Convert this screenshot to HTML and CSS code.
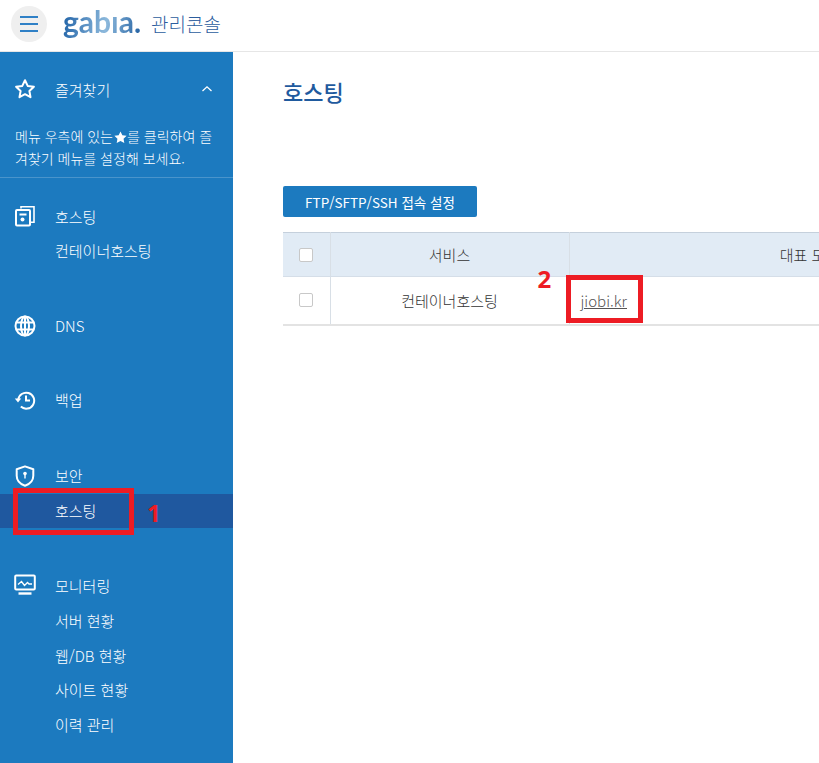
FILE: index.html
```html
<!DOCTYPE html>
<html lang="ko">
    <head>
        <meta charset="UTF-8">
        <meta name="viewport" content="width=device-width, initial-scale=1.0">
        <title>gabia 관리콘솔</title>
        <link rel="stylesheet" href="styles.css">
    </head>
    <body>
        <header class="topBar">
            <button class="menuButton">
                <span></span><span></span><span></span>
            </button>
            <span class="logo">gabıa.</span>
            <span class="consoleName">관리콘솔</span>
        </header>
        <div class="layout">
            <nav class="sidebar">
                <div class="favorites">
                    <div class="navTitle">
                        <svg class="navIcon" viewBox="0 0 22 22"><path d="M11 2.200l2.700 5.700 6.200.8-4.500 4.300 1.100 6.200-5.500-3-5.500 3 1.100-6.200-4.500-4.300 6.200-.8z" fill="none" stroke="#fff" stroke-width="2" stroke-linejoin="round"/></svg>
                        <span>즐겨찾기</span>
                        <svg class="chevron" viewBox="0 0 12 8"><path d="M1.500 6L6 1.800 10.500 6" fill="none" stroke="#fff" stroke-width="1.300"/></svg>
                    </div>
                    <p class="favoritesText">메뉴 우측에 있는<svg class="miniStar" viewBox="0 0 14 14"><path d="M7 .5l2 4.100 4.600.6-3.300 3.200.8 4.600L7 10.800l-4.100 2.200.8-4.600L.4 5.200 5 4.600z" fill="#fff"/></svg>를 클릭하여 즐겨찾기 메뉴를 설정해 보세요.</p>
                </div>
                <div class="navGroup first">
                    <div class="navTitle">
                        <svg class="navIcon" viewBox="0 0 22 22"><path d="M7 3.500V1.800h13v15.400h-3" fill="none" stroke="#fff" stroke-width="1.600"/><rect x="2" y="5" width="14" height="15.500" rx="1" fill="none" stroke="#fff" stroke-width="2"/><path d="M5.500 9.500h7" stroke="#fff" stroke-width="2"/><circle cx="8.500" cy="14.500" r="2" fill="#fff"/></svg>
                        <span>호스팅</span>
                    </div>
                    <a class="navItem">컨테이너호스팅</a>
                </div>
                <div class="navGroup dns">
                    <div class="navTitle">
                        <svg class="navIcon" viewBox="0 0 22 22"><g fill="none" stroke="#fff" stroke-width="2"><circle cx="11" cy="11" r="9.500"/><ellipse cx="11" cy="11" rx="4" ry="9.500"/><path d="M2 7.500h18M2 14.500h18M11 2v18"/></g></svg>
                        <span>DNS</span>
                    </div>
                </div>
                <div class="navGroup backup">
                    <div class="navTitle">
                        <svg class="navIcon" viewBox="0 0 22 22"><path d="M4.200 11a8 8 0 1 1 2.600 6.600" fill="none" stroke="#fff" stroke-width="2"/><path d="M.8 9.500h6.400L4 13.500z" fill="#fff"/><path d="M12 6.500v5h4" fill="none" stroke="#fff" stroke-width="2"/></svg>
                        <span>백업</span>
                    </div>
                </div>
                <div class="navGroup security">
                    <div class="navTitle">
                        <svg class="navIcon" viewBox="0 0 22 22"><path d="M11 1.400l8.300 2.900v6.400c0 4.700-3.500 8.300-8.300 10-4.800-1.700-8.300-5.300-8.300-10V4.300z" fill="none" stroke="#fff" stroke-width="2" stroke-linejoin="round"/><circle cx="11" cy="8.600" r="1.800" fill="#fff"/><path d="M11 9v4.500" stroke="#fff" stroke-width="1.400"/></svg>
                        <span>보안</span>
                    </div>
                    <a class="navItem active">
                        호스팅
                        <span class="markBox"></span>
                        <span class="markNumber">1</span>
                    </a>
                </div>
                <div class="navGroup monitoring">
                    <div class="navTitle">
                        <svg class="navIcon" viewBox="0 0 22 22"><rect x="1.200" y="1.500" width="19.600" height="14" rx="1" fill="none" stroke="#fff" stroke-width="2"/><path d="M4 10.500l3.500-3 3 4 3-3 1.500 1.500H18" fill="none" stroke="#fff" stroke-width="1.400"/><path d="M4.500 19.500h13" stroke="#fff" stroke-width="2.400"/></svg>
                        <span>모니터링</span>
                    </div>
                    <a class="navItem">서버 현황</a>
                    <a class="navItem">웹/DB 현황</a>
                    <a class="navItem">사이트 현황</a>
                    <a class="navItem">이력 관리</a>
                </div>
            </nav>
            <main class="content">
                <h1 class="pageTitle">호스팅</h1>
                <button class="ftpButton">FTP/SFTP/SSH 접속 설정</button>
                <table class="serviceTable">
                    <tr class="headRow">
                        <th class="checkCol"><span class="checkBox"></span></th>
                        <th class="serviceCol">서비스</th>
                        <th>대표 도메인</th>
                    </tr>
                    <tr>
                        <td class="checkCol"><span class="checkBox"></span></td>
                        <td class="serviceCol">컨테이너호스팅</td>
                        <td class="domainCell">
                            <a class="domainLink">jiobi.kr</a>
                            <span class="markBox"></span>
                            <span class="markNumber">2</span>
                        </td>
                    </tr>
                </table>
            </main>
        </div>
    </body>
</html>
```

FILE: styles.css
```css
* {
    box-sizing: border-box;
}

html, body {
    height: 100%;
}

body {
    margin: 0;
    display: flex;
    flex-direction: column;
    overflow: hidden;
    font-family: "Noto Sans CJK KR", "Noto Sans", sans-serif;
    font-weight: 300;
    color: #333;
}

.topBar {
    height: 52px;
    flex: none;
    display: flex;
    align-items: center;
    padding: 0 0 4px 11px;
    border-bottom: 1px solid #e6e6e6;
}

.menuButton {
    width: 36px;
    height: 36px;
    padding: 0;
    border: 0;
    border-radius: 50%;
    background: #efefef;
    display: flex;
    flex-direction: column;
    align-items: center;
    justify-content: center;
    gap: 5px;
}

.menuButton span {
    width: 18px;
    height: 2px;
    background: #2f80c6;
}

.logo {
    margin-left: 16px;
    padding-bottom: 6px;
    font-family: "Lato", sans-serif;
    font-size: 30px;
    line-height: 36px;
    font-weight: 700;
    background: linear-gradient(100deg, #1c5fa5, #8db9dc 55%, #1d5c9f);
    -webkit-background-clip: text;
    background-clip: text;
    color: transparent;
}

.consoleName {
    margin-left: 10px;
    font-size: 19px;
    color: #2c5d9e;
}

.layout {
    flex: 1;
    display: flex;
    min-height: 0;
}

.sidebar {
    width: 233px;
    flex: none;
    background: #1c7abf;
    color: #fff;
}

.favorites {
    padding-top: 19px;
    height: 126px;
    border-bottom: 1px solid #4a94cb;
}

.navTitle {
    height: 36px;
    margin-bottom: 1px;
    display: flex;
    align-items: center;
    padding-left: 14px;
    font-size: 15px;
}

.navIcon {
    width: 22px;
    height: 22px;
    margin-right: 19px;
    flex: none;
}

.chevron {
    width: 12px;
    height: 8px;
    margin-left: 91px;
}

.favoritesText {
    margin: 18px 15px 0;
    font-size: 14px;
    line-height: 22px;
}

.miniStar {
    width: 13px;
    height: 13px;
    margin-left: 1px;
    vertical-align: -2px;
}

.navGroup.first {
    margin-top: 20px;
}

.navGroup.dns {
    margin-top: 39px;
}

.navGroup.backup {
    margin-top: 38px;
}

.navGroup.security {
    margin-top: 40px;
}

.navGroup.monitoring {
    margin-top: 39px;
}

.first .navTitle, .security .navTitle {
    margin-bottom: 0;
}

.navItem {
    position: relative;
    display: block;
    height: 34.600px;
    line-height: 34px;
    padding-left: 55px;
    font-size: 15px;
}

.navItem.active {
    background: #1f589f;
}

.markBox {
    position: absolute;
    border: 5px solid #ed1c24;
}

.markNumber {
    position: absolute;
    font-family: "Noto Sans", sans-serif;
    font-size: 24px;
    line-height: 24px;
    font-weight: 700;
    color: #ed1c24;
}

.navItem .markBox {
    left: 13px;
    top: -6px;
    width: 121px;
    height: 47px;
}

.navItem .markNumber {
    left: 147px;
    top: 7px;
}

.content {
    flex: 1;
    min-width: 0;
    overflow: hidden;
    padding: 0 0 0 50px;
}

.pageTitle {
    margin: 22px 0 0;
    font-size: 22px;
    line-height: 34px;
    font-weight: 500;
    color: #1f5a9e;
}

.ftpButton {
    display: block;
    width: 194px;
    height: 31px;
    margin-top: 78px;
    padding: 0;
    border: 0;
    border-radius: 2px;
    background: #1c7abf;
    color: #fff;
    font: 400 13.500px "Noto Sans CJK KR", sans-serif;
}

.serviceTable {
    width: 780px;
    margin-top: 15px;
    border-collapse: collapse;
    table-layout: fixed;
    font-size: 15px;
    border-top: 1px solid #c5d0dc;
    border-bottom: 2px solid #e3e3e3;
}

.serviceTable th {
    height: 44px;
    background: #e1ebf5;
    font-weight: 300;
    border-bottom: 1px solid #d5dee8;
}

.serviceTable td {
    height: 48px;
    text-align: center;
}

.checkCol {
    width: 47px;
}

.serviceCol {
    width: 239px;
}

.checkCol, .serviceCol {
    border-right: 1px solid #d8dfe6;
}

.checkBox {
    display: block;
    width: 14px;
    height: 14px;
    margin: 0 auto;
    background: #fff;
    border: 1px solid #c8c8c8;
    border-radius: 2px;
}

.serviceTable td.domainCell {
    position: relative;
    text-align: left;
    padding-left: 11px;
}

.domainLink {
    color: #555;
    text-decoration: underline;
}

.domainCell .markBox {
    left: -4px;
    top: -2px;
    width: 77px;
    height: 48px;
}

.domainCell .markNumber {
    left: -32px;
    top: -10px;
}
```
